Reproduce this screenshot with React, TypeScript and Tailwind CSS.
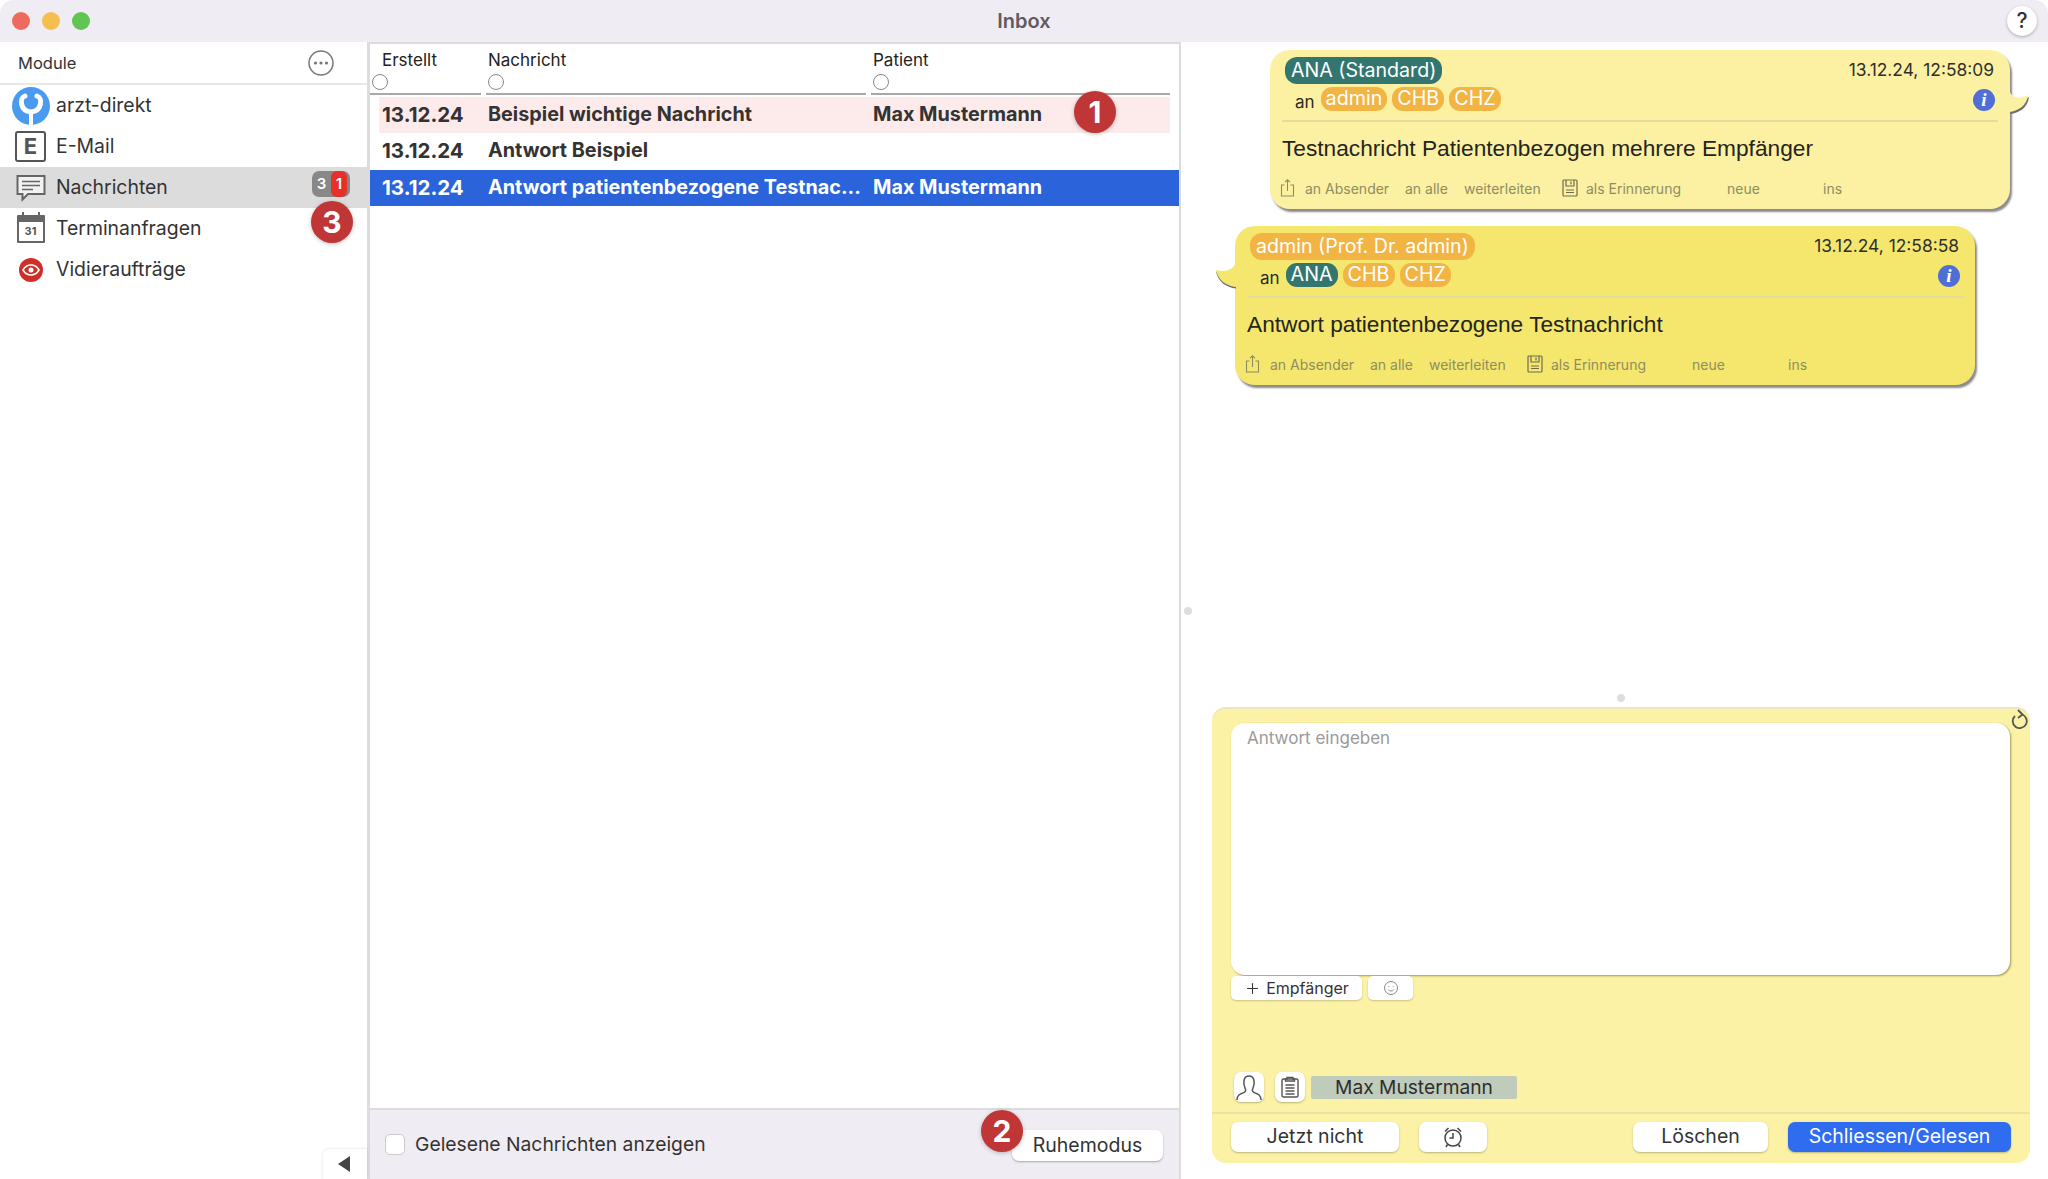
import { Plus } from 'lucide-react'

const ShareIcon = () => (
  <svg width="15" height="18" viewBox="0 0 15 18" fill="none" stroke="#8f8c62" strokeWidth="1.1">
    <path d="M4.5 6H1.5v11h12V6h-3" />
    <path d="M7.5 12V1M5 3.2 7.5 .8 10 3.2" />
  </svg>
)

const SaveIcon = () => (
  <svg width="16" height="18" viewBox="0 0 16 18" fill="none" stroke="#6f6c4c" strokeWidth="1.2">
    <rect x="1" y="1" width="14" height="16" rx="1" />
    <path d="M4 1v6h8V1M9 2.5v3M4 11h8M4 13.5h8" />
  </svg>
)

const InfoIcon = () => (
  <div className="w-[22px] h-[22px] mt-[1px] rounded-full bg-[#4f6fd6] flex items-center justify-center text-white text-[19px] font-bold italic font-['Liberation_Serif',serif] leading-none">
    i
  </div>
)

function Pill({ label, teal }: { label: string; teal?: boolean }) {
  return (
    <span className={`h-[24px] px-[5px] rounded-[11px] flex items-center text-white text-[19.7px] ${teal ? 'bg-[#33766f]' : 'bg-[#f2b544]'}`}>
      {label}
    </span>
  )
}

function Bubble({ bg, tail, sender, senderTeal, to, time, text, className }: {
  bg: string
  tail: 'left' | 'right'
  sender: string
  senderTeal?: boolean
  to: { label: string; teal?: boolean }[]
  time: string
  text: string
  className: string
}) {
  const fill = bg === 'light' ? '#fcf1a2' : '#f5e76e'
  return (
    <div className={`relative w-[740px] h-[159px] rounded-[20px] shadow-[2px_3px_2px_rgba(60,60,60,0.6)] pt-[7px] ${bg === 'light' ? 'bg-[#fcf1a2]' : 'bg-[#f5e76e]'} ${className}`}>
      {tail === 'right' ? (
        <svg className="absolute left-[739px] top-[38px]" width="22" height="27" viewBox="0 0 22 27">
          <path d="M0 0C1 8 7 13 19 7C18 17 10 23 0 24Z" fill="#6f6f6f" transform="translate(1 2)" />
          <path d="M0 0C1 8 7 13 19 7C18 17 10 23 0 24Z" fill={fill} />
        </svg>
      ) : (
        <svg className="absolute -left-[20px] top-[34px]" width="22" height="30" viewBox="0 0 22 30">
          <path d="M21 0C20 8 14 13 1 10C3 20 11 26 21 27Z" fill="#6f6f6f" transform="translate(0 1.500)" />
          <path d="M21 0C20 8 14 13 1 10C3 20 11 26 21 27Z" fill={fill} />
        </svg>
      )}
      <div className="flex justify-between pl-[15px] pr-[16px]">
        <span className={`h-[27px] px-[6px] rounded-[12px] flex items-center text-white text-[19.6px] ${senderTeal ? 'bg-[#33766f]' : 'bg-[#f2b544]'}`}>
          {sender}
        </span>
        <span className="text-[17.4px] text-[#2f2f2a] leading-[26px]">{time}</span>
      </div>
      <div className="flex items-center justify-between h-[24px] pl-[25px] pr-[15px] mt-[3px]">
        <div className="flex items-center gap-[5px]">
          <span className="text-[17px] leading-[20px] text-[#2a2a25] mr-[1px] mt-[5px]">an</span>
          {to.map((r) => (
            <Pill key={r.label} label={r.label} teal={r.teal} />
          ))}
        </div>
        <InfoIcon />
      </div>
      <div className="mx-[12px] mt-[9px] h-[2px] bg-[#e6db9a]" />
      <p className="ml-[12px] mt-[12px] text-[22.7px] leading-[28px] text-[#24241e] font-['Liberation_Sans',sans-serif]">{text}</p>
      <div className="flex items-center h-[20px] mt-[16px] ml-[10px] text-[14px] text-[#8f8c62]">
        <ShareIcon />
        <span className="ml-[10px] w-[100px]">an Absender</span>
        <span className="w-[59px]">an alle</span>
        <span className="w-[98px]">weiterleiten</span>
        <SaveIcon />
        <span className="ml-[8px] w-[141px]">als Erinnerung</span>
        <span className="w-[96px]">neue</span>
        <span>ins</span>
      </div>
    </div>
  )
}

function NavRow({ icon, label, active, children }: { icon: React.ReactNode; label: string; active?: boolean; children?: React.ReactNode }) {
  return (
    <div className={`relative h-[41px] flex items-center text-[19.4px] text-[#333] ${active ? 'bg-[#dcdcdc]' : ''}`}>
      <div className="w-[56px] flex items-center justify-center pl-[5px]">{icon}</div>
      {label}
      {children}
    </div>
  )
}

const RedBadge = ({ n, className }: { n: number; className: string }) => (
  <div className={`absolute w-[42px] h-[42px] rounded-full bg-[#c03535] text-white text-[30px] font-bold flex items-center justify-center shadow-[0_1px_4px_rgba(0,0,0,0.25)] ${className}`}>
    {n}
  </div>
)

const rows = [
  { date: '13.12.24', msg: 'Beispiel wichtige Nachricht', patient: 'Max Mustermann', tone: 'pink' },
  { date: '13.12.24', msg: 'Antwort Beispiel', patient: '', tone: 'plain' },
  { date: '13.12.24', msg: 'Antwort patientenbezogene Testnac...', patient: 'Max Mustermann', tone: 'blue' },
]

export default function App() {
  return (
    <div className="w-[2048px] h-[1179px] flex flex-col overflow-hidden bg-white font-['Inter',sans-serif]">
      {/* Title bar */}
      <div className="h-[42px] shrink-0 bg-[#f0ecf3] rounded-t-[14px] grid grid-cols-3 items-center">
        <div className="flex gap-[12px] pl-[12px]">
          <span className="w-[18px] h-[18px] rounded-full bg-[#ed6a5f]" />
          <span className="w-[18px] h-[18px] rounded-full bg-[#f4bf4f]" />
          <span className="w-[18px] h-[18px] rounded-full bg-[#61c554]" />
        </div>
        <div className="text-center text-[20px] font-semibold text-[#5f5b62]">Inbox</div>
        <div className="flex justify-end pr-[11px]">
          <div className="w-[30px] h-[30px] rounded-full bg-white shadow-[0_1px_3px_rgba(0,0,0,0.3)] flex items-center justify-center text-[21px] font-medium text-[#333]">?</div>
        </div>
      </div>

      <div className="flex flex-1 min-h-0">
        {/* Sidebar */}
        <div className="w-[370px] shrink-0 flex flex-col border-r-[3px] border-[#dcdcdc]">
          <div className="h-[43px] shrink-0 flex items-center justify-between pl-[18px] pr-[33px] pt-[2px] border-b-2 border-[#e8e8e8] text-[16.5px] text-[#333]">
            Module
            <svg className="-mt-[2px]" width="26" height="26" viewBox="0 0 26 26" fill="none">
              <circle cx="13" cy="13" r="12" stroke="#777" strokeWidth="1.5" />
              <circle cx="7.5" cy="13" r="1.6" fill="#777" />
              <circle cx="13" cy="13" r="1.6" fill="#777" />
              <circle cx="18.5" cy="13" r="1.6" fill="#777" />
            </svg>
          </div>
          <div className="flex-1 relative">
            <NavRow
              label="arzt-direkt"
              icon={
                <svg width="38" height="38" viewBox="0 0 38 38">
                  <circle cx="19" cy="19" r="19" fill="#4a9bf0" />
                  <path d="M13 9C7 11 8 24 19 25C30 24 31 11 25 9" fill="none" stroke="#fff" strokeWidth="5" strokeLinecap="round" />
                  <path d="M19 25V38" stroke="#fff" strokeWidth="4" />
                </svg>
              }
            />
            <NavRow
              label="E-Mail"
              icon={
                <div className="w-[31px] h-[31px] rounded-[3px] border-2 border-[#555] flex items-center justify-center text-[22px] font-bold text-[#555] bg-white">E</div>
              }
            />
            <NavRow
              active
              label="Nachrichten"
              icon={
                <svg width="30" height="28" viewBox="0 0 30 28" fill="none" stroke="#666" strokeWidth="2">
                  <path d="M1.5 2h27v18H12l-5.5 5.5V20h-5Z" fill="#f2f2f2" />
                  <path d="M6 7.5h18M6 11.5h18M6 15.5h11" strokeWidth="1.3" />
                </svg>
              }
            >
              <div className="absolute left-[312px] top-[4px] w-[38px] h-[26px] rounded-[7px] bg-[#888] flex text-white text-[15px] font-semibold">
                <span className="w-[19px] text-center leading-[26px]">3</span>
                <span className="w-[16px] bg-[#e8302a] rounded-[6px] text-center leading-[26px]">1</span>
              </div>
            </NavRow>
            <NavRow
              label="Terminanfragen"
              icon={
                <div className="relative w-[28px] h-[28px] rounded-[1px] border-2 border-t-[7px] border-[#666] bg-white flex items-center justify-center text-[11px] font-bold text-[#555]">
                  31
                  <span className="absolute left-[3px] -top-[10px] w-[2px] h-[6px] bg-[#666]" />
                  <span className="absolute right-[3px] -top-[10px] w-[2px] h-[6px] bg-[#666]" />
                </div>
              }
            />
            <NavRow
              label="Vidieraufträge"
              icon={
                <svg width="24" height="24" viewBox="0 0 24 24" fill="none">
                  <circle cx="12" cy="12" r="12" fill="#cf2f28" />
                  <path d="M4 12c2-3.5 5-5 8-5s6 1.500 8 5c-2 3.500-5 5-8 5s-6-1.500-8-5Z" stroke="#fff" strokeWidth="1.6" />
                  <circle cx="12" cy="12" r="2.500" fill="#fff" />
                </svg>
              }
            />
            <RedBadge n={3} className="left-[311px] top-[116px]" />
          </div>
          <div className="flex justify-end">
            <div className="w-[44px] h-[30px] pr-[2px] bg-white rounded-tl-[6px] shadow-[0_0_3px_rgba(0,0,0,0.15)] flex items-center justify-center">
              <svg width="14" height="18" viewBox="0 0 14 18"><path d="M13 1v16L1 9Z" fill="#444" /></svg>
            </div>
          </div>
        </div>

        {/* Message list */}
        <div className="w-[811px] shrink-0 flex flex-col border-r-2 border-[#dcdcdc]">
          <div className="relative flex-1 border-t-2 border-[#dcdcdc]">
            <div className="grid grid-cols-[116px_385px_1fr] h-[52px] text-[17px] text-[#222] pr-[4px]">
              <HeaderCell label="Erstellt" />
              <HeaderCell label="Nachricht" />
              <HeaderCell label="Patient" />
            </div>
            {rows.map((r) => (
              <div
                key={r.msg}
                className={`grid grid-cols-[116px_385px_1fr] items-center h-[36px] text-[19.8px] font-bold ${
                  r.tone === 'pink' ? 'bg-[#fdeaea] mx-[9px] mt-[1px] text-[#333]' : r.tone === 'blue' ? 'bg-[#2b63db] text-white mt-[1px]' : 'text-[#333]'
                }`}
              >
                <span className={r.tone === 'pink' ? 'pl-[3px] text-[20.5px]' : 'pl-[12px] text-[20.5px]'}>{r.date}</span>
                <span className={r.tone === 'pink' ? 'pl-[2px] -ml-[9px]' : 'pl-[2px] whitespace-nowrap'}>{r.msg}</span>
                <span className={r.tone === 'pink' ? '-ml-[9px] pl-[2px]' : 'pl-[2px]'}>{r.patient}</span>
              </div>
            ))}
            <RedBadge n={1} className="left-[704px] top-[47px]" />
          </div>
          <div className="relative h-[71px] shrink-0 border-t-2 border-[#dcdcdc] bg-[#f0ecf3] flex items-center justify-between pl-[15px] pr-[16px]">
            <div className="flex items-center gap-[10px] text-[19.3px] text-[#333]">
              <span className="w-[20px] h-[21px] rounded-[5px] bg-white border border-[#ccc]" />
              Gelesene Nachrichten anzeigen
            </div>
            <div className="w-[151px] h-[31px] mt-[2px] rounded-[7px] bg-white shadow-[0_1px_2px_rgba(0,0,0,0.3)] flex items-center justify-center text-[19.5px] text-[#333]">
              Ruhemodus
            </div>
            <RedBadge n={2} className="left-[611px] top-[0px]" />
          </div>
        </div>

        {/* Splitter */}
        <div className="w-[13px] shrink-0 flex items-center justify-center">
          <span className="w-[8px] h-[8px] rounded-full bg-[#dedede]" />
        </div>

        {/* Conversation */}
        <div className="flex-1 flex flex-col min-w-0">
          <div className="flex-1">
            <Bubble
              bg="light"
              tail="right"
              className="ml-[76px] mt-[8px]"
              sender="ANA (Standard)"
              senderTeal
              to={[{ label: 'admin' }, { label: 'CHB' }, { label: 'CHZ' }]}
              time="13.12.24, 12:58:09"
              text="Testnachricht Patientenbezogen mehrere Empfänger"
            />
            <Bubble
              bg="dark"
              tail="left"
              className="ml-[41px] mt-[17px]"
              sender="admin (Prof. Dr. admin)"
              to={[{ label: 'ANA', teal: true }, { label: 'CHB' }, { label: 'CHZ' }]}
              time="13.12.24, 12:58:58"
              text="Antwort patientenbezogene Testnachricht"
            />
          </div>
          <div className="flex justify-center ml-[18px] w-[818px] pb-[5px]">
            <span className="w-[8px] h-[8px] rounded-full bg-[#dedede]" />
          </div>
          <div className="relative ml-[18px] mb-[16px] w-[818px] h-[456px] rounded-[14px] bg-[#fbf2a5] border-t-2 border-[#e8e4c4] pt-[14px] pl-[19px] pb-[11px] flex flex-col">
            <svg className="absolute right-[2px] top-0" width="18" height="22" viewBox="0 0 18 22" fill="none" stroke="#555" strokeWidth="1.8">
              <path d="M12 5.500a7 7 0 1 1-7 1.500" />
              <path d="M8 1l4.500 4.500L8 9" />
            </svg>
            <div className="w-[779px] h-[252px] shrink-0 rounded-[14px] bg-white shadow-[1px_1px_2px_rgba(120,115,60,0.7)] pl-[16px] pt-[3px] text-[17px] text-[#9a9a9a]">
              Antwort eingeben
            </div>
            <div className="flex items-center gap-[6px] mt-[1px]">
              <div className="w-[131px] h-[24px] rounded-[5px] bg-white shadow-[0_1px_2px_rgba(0,0,0,0.2)] flex items-center justify-center gap-[5px] text-[16px] text-[#333]">
                <Plus size={17} strokeWidth={1.5} />
                Empfänger
              </div>
              <div className="w-[45px] h-[24px] rounded-[5px] bg-white shadow-[0_1px_2px_rgba(0,0,0,0.2)] flex items-center justify-center">
                <svg width="16" height="16" viewBox="0 0 16 16" fill="none" stroke="#888">
                  <circle cx="8" cy="8" r="6.500" />
                  <path d="M5 9.500c1.500 2 4.500 2 6 0M5.800 6v.8M10.200 6v.8" />
                </svg>
              </div>
            </div>
            <div className="flex items-center gap-[6px] mt-auto ml-[3px] mb-[10px]">
              <div className="w-[30px] h-[30px] rounded-[7px] bg-white shadow-[0_1px_2px_rgba(0,0,0,0.25)] flex items-center justify-center mr-[5px]">
                <svg width="28" height="28" viewBox="0 0 28 28" fill="none" stroke="#555" strokeWidth="1.5">
                  <path d="M2 27c0-5 3-6 7-7.500 2-1 2-2.500 1-4.500-2-4-2-12 4-12s6 8 4 12c-1 2-1 3.500 1 4.500 4 1.500 7 2.500 7 7.500" />
                </svg>
              </div>
              <div className="w-[30px] h-[30px] rounded-[7px] bg-white shadow-[0_1px_2px_rgba(0,0,0,0.25)] flex items-center justify-center">
                <svg width="18" height="22" viewBox="0 0 18 22" fill="none" stroke="#555" strokeWidth="1.400">
                  <rect x="1" y="3" width="16" height="18" rx="1.500" />
                  <path d="M6 3V1.500h6V3h1.500v2h-9V3ZM4.500 9h9M4.500 12h9M4.500 15h9M4.500 18h9" />
                </svg>
              </div>
              <div className="w-[206px] h-[23px] rounded-[2px] bg-[#bfccbc] flex items-center justify-center text-[19.2px] text-[#2e2e2e]">
                Max Mustermann
              </div>
            </div>
            <div className="-ml-[19px] h-[2px] bg-[#ece3a0]" />
            <div className="flex items-center justify-between mt-[8px] pr-[19px] text-[19.5px] text-[#333]">
              <div className="flex gap-[20px]">
                <div className="w-[168px] h-[30px] rounded-[7px] bg-white shadow-[0_1px_2px_rgba(0,0,0,0.25)] flex items-center justify-center">Jetzt nicht</div>
                <div className="w-[68px] h-[30px] rounded-[7px] bg-white shadow-[0_1px_2px_rgba(0,0,0,0.25)] flex items-center justify-center">
                  <svg width="20" height="22" viewBox="0 0 20 22" fill="none" stroke="#444" strokeWidth="1.500">
                    <circle cx="10" cy="12" r="8" />
                    <path d="M10 7v5H6.500M2 5.500 5.500 2M18 5.500 14.500 2M4.500 18.500 3 21M15.500 18.500 17 21" />
                  </svg>
                </div>
              </div>
              <div className="flex gap-[20px]">
                <div className="w-[135px] h-[30px] rounded-[7px] bg-white shadow-[0_1px_2px_rgba(0,0,0,0.25)] flex items-center justify-center">Löschen</div>
                <div className="w-[223px] h-[30px] rounded-[7px] bg-[#2f6cf0] shadow-[0_1px_2px_rgba(0,0,0,0.25)] flex items-center justify-center text-white">Schliessen/Gelesen</div>
              </div>
            </div>
          </div>
        </div>
      </div>
    </div>
  )
}

function HeaderCell({ label }: { label: string }) {
  return (
    <div className="relative pl-[2px] first:pl-[12px] pt-[5px] border-b-2 border-[#a8a8a8] mr-[5px] h-[51px] leading-[22px]">
      {label}
      <span className="absolute left-[2px] top-[30px] w-[16px] h-[16px] rounded-full border border-[#888] bg-white" />
    </div>
  )
}
